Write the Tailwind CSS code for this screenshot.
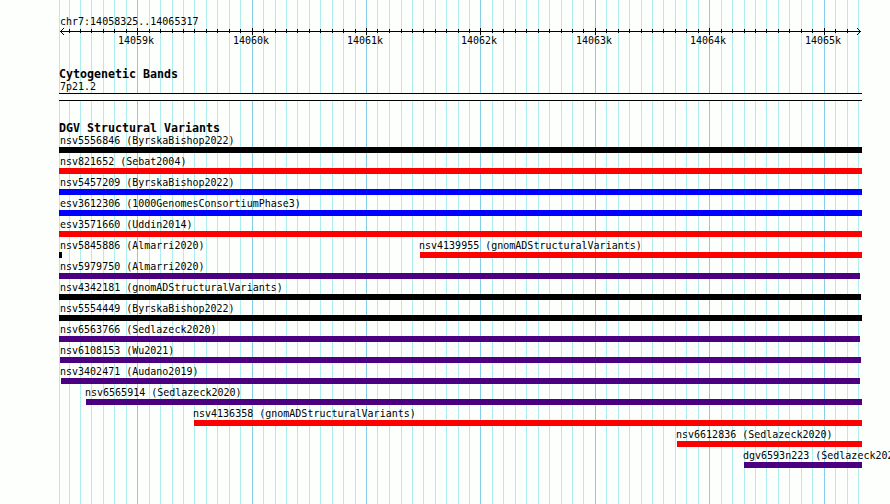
<!DOCTYPE html>
<html lang="en"><head><meta charset="utf-8"><title>chr7:14058325..14065317</title>
<script src="https://cdn.jsdelivr.net/npm/@tailwindcss/browser@4"></script></head>
<body class="bg-[#fdfffc]">
<main class="relative w-[890px] h-[504px] overflow-hidden bg-[#fdfffc] text-black font-['DejaVu_Sans_Mono',monospace] text-[10px] leading-3">
<svg class="absolute inset-0" width="890" height="504" shape-rendering="crispEdges"><g id="grid"></g><rect x="59" y="94" width="803" height="6" fill="#fdfffc"/><g id="ruler"></g><path d="M60 31.5H861M63 28.5h1M62 29.5h1M61 30.5h1M61 32.5h1M62 33.5h1M63 34.5h1M857 28.5h1M858 29.5h1M859 30.5h1M859 32.5h1M858 33.5h1M857 34.5h1" stroke="#000"/></svg>
<header class="relative h-[68px] pt-4">
<h1 class="ml-[60px] h-3 whitespace-pre origin-bottom scale-y-110">chr7:14058325..14065317</h1>
<div id="labels" class="mt-[7px] ml-[118px] flex h-3 origin-bottom scale-y-110"></div>
</header>
<section class="relative h-[54px]">
<h2 class="ml-[59px] h-3 text-[11.63px] font-bold">Cytogenetic Bands</h2>
<p class="ml-[60px] h-[13px] leading-[13px] origin-bottom scale-y-110">7p21.2</p>
<div class="ml-[59px] w-[803px] h-2 border-y border-black"></div>
</section>
<section class="relative">
<h2 class="ml-[59px] h-3 text-[11.63px] font-bold">DGV Structural Variants</h2>
<div id="tracks" class="flex flex-col"></div>
</section>
</main>
<script>
const grid=[59,69,80,91,103,114,126,137,149,160,172,183,194,206,217,229,240,252,263,275,286,297,309,320,332,343,355,366,377,389,401,412,423,435,446,458,469,480,492,503,515,526,538,549,561,572,583,595,606,618,629,641,652,663,675,686,698,709,721,732,744,755,766,778,789,801,812,824,835,847,858];
const major=[137,252,366,480,595,709,824];
document.getElementById('grid').innerHTML=grid.map(x=>`<rect x="${x}" y="0" width="1" height="504" fill="${major.includes(x)?'#87ceeb':'#afeeee'}"/>`).join('');
document.getElementById('ruler').innerHTML=grid.slice(1,-1).map(x=>`<rect x="${x}" y="${major.includes(x)?28:29}" width="1" height="${major.includes(x)?7:4}"/>`).join('');
document.getElementById('labels').innerHTML=major.map((x,i)=>`<span class="shrink-0" style="width:${(major[i+1]||890)-x}px">${14059+i}k</span>`).join('');
const K='bg-black',R='bg-[#ff0000]',B='bg-[#0000ff]',P='bg-[#4b0082]';
const rows=[
[['nsv5556846 (ByrskaBishop2022)',59,862,K]],
[['nsv821652 (Sebat2004)',59,862,R]],
[['nsv5457209 (ByrskaBishop2022)',59,862,B]],
[['esv3612306 (1000GenomesConsortiumPhase3)',59,862,B]],
[['esv3571660 (Uddin2014)',59,862,R]],
[['nsv5845886 (Almarri2020)',59,62,K],['nsv4139955 (gnomADStructuralVariants)',420,862,R]],
[['nsv5979750 (Almarri2020)',59,860,P]],
[['nsv4342181 (gnomADStructuralVariants)',59,861,K]],
[['nsv5554449 (ByrskaBishop2022)',59,862,K]],
[['nsv6563766 (Sedlazeck2020)',59,860,P]],
[['nsv6108153 (Wu2021)',60,861,P]],
[['nsv3402471 (Audano2019)',61,860,P]],
[['nsv6565914 (Sedlazeck2020)',86,862,P]],
[['nsv4136358 (gnomADStructuralVariants)',194,862,R]],
[['nsv6612836 (Sedlazeck2020)',677,862,R]],
[['dgv6593n223 (Sedlazeck2020)',744,862,P]]];
document.getElementById('tracks').innerHTML=rows.map(r=>{let end=0;return '<div class="flex h-[21px]">'+r.map(([t,s,e,c])=>{
const h=`<div class="shrink-0" style="margin-left:${s-end}px;width:${e-s}px"><div class="h-[13px] leading-[13px] whitespace-pre origin-bottom scale-y-110" style="margin-left:${s<62?60-s:-1}px">${t}</div><div class="h-1.5 ${c}"></div></div>`;end=e;return h}).join('')+'</div>'}).join('');
</script></body></html>
